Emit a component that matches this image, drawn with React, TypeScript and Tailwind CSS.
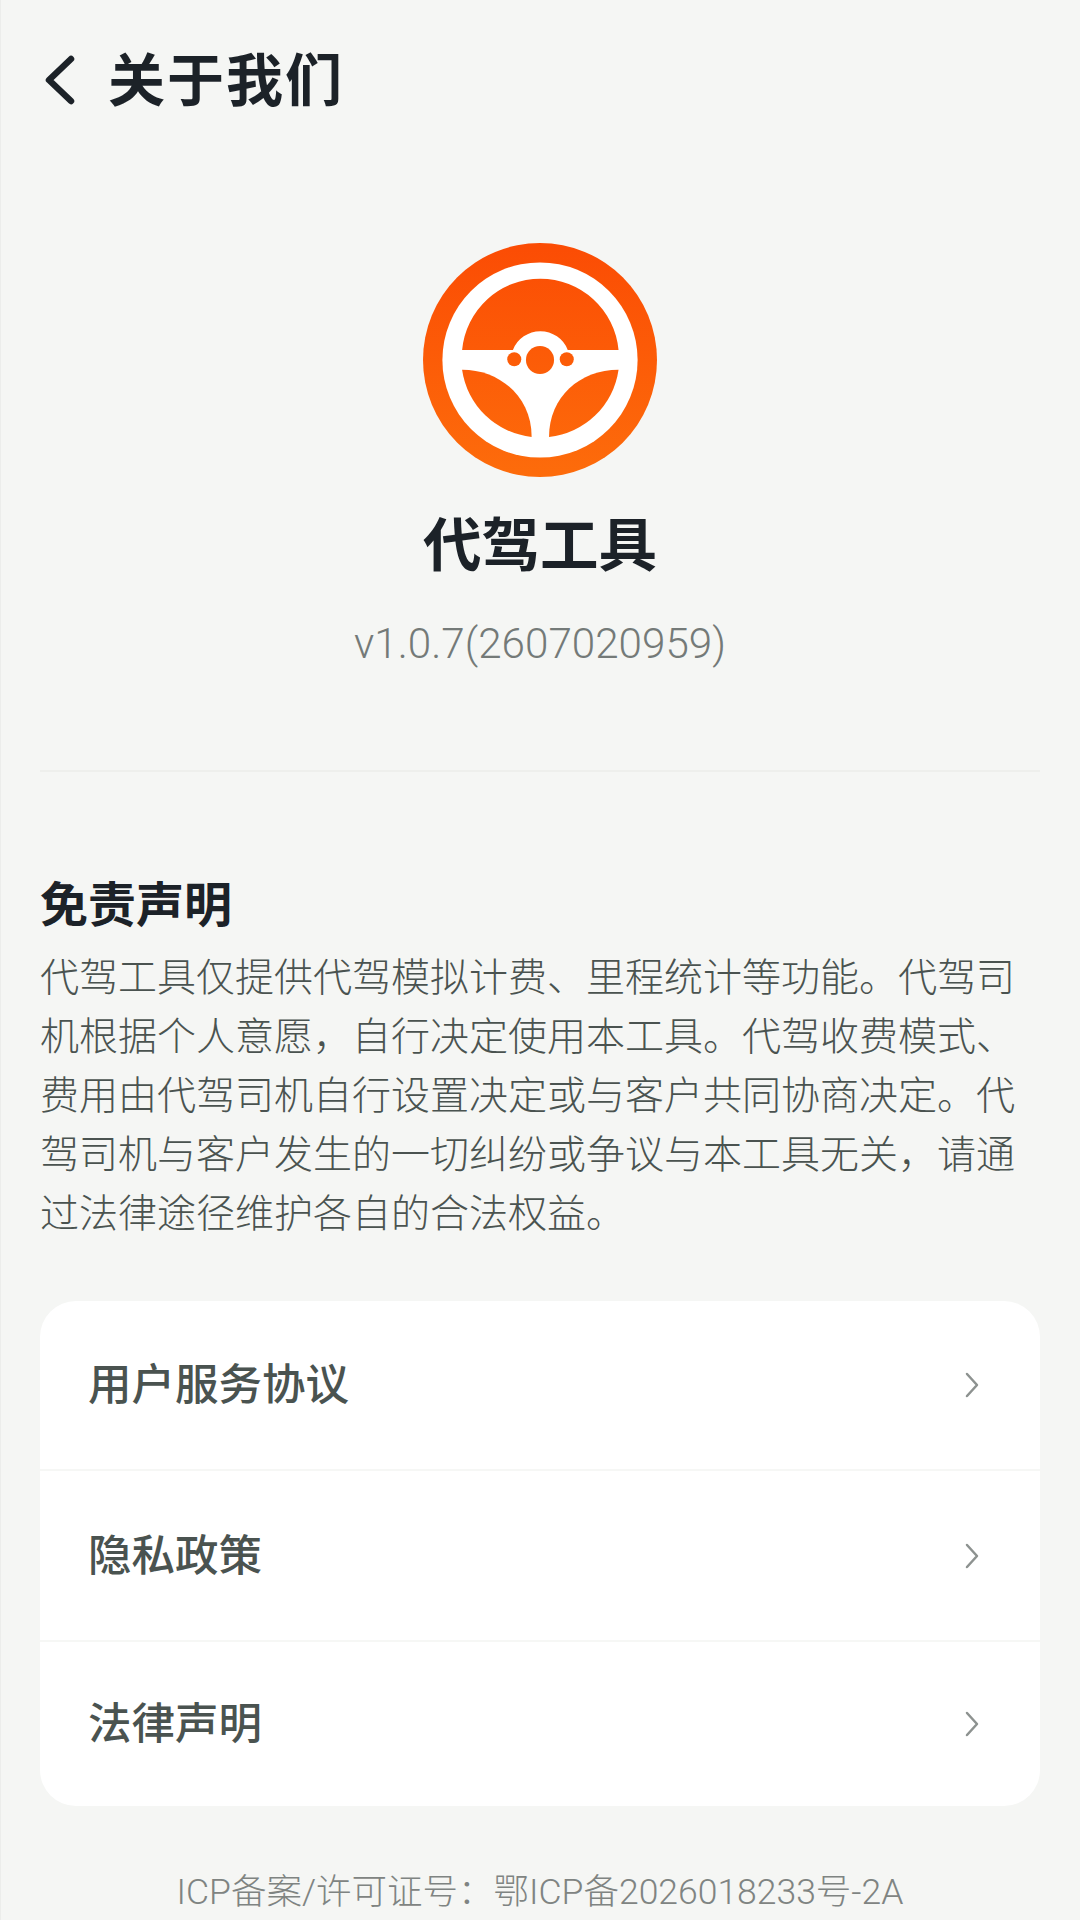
const FONT = 'Roboto, "Noto Sans CJK SC", sans-serif';

const links = [
  { label: '用户服务协议', height: 'h-[168px]' },
  { label: '隐私政策', height: 'h-[171px]' },
  { label: '法律声明', height: 'h-[166px]' },
];

// Steering wheel logo, drawn in the coordinates of a 840 box
function Logo() {
  return (
    <svg viewBox="70 70 700 700" className="h-[234px] w-[234px]">
      <defs>
        <linearGradient id="wheel" gradientUnits="userSpaceOnUse" x1="420" y1="70" x2="420" y2="770">
          <stop offset="0" stopColor="#fb4c04" />
          <stop offset="1" stopColor="#fd6c0b" />
        </linearGradient>
      </defs>
      <circle cx="420" cy="420" r="350" fill="url(#wheel)" />
      <circle cx="420" cy="420" r="292" fill="#fff" />
      <g fill="url(#wheel)">
        <path d="M187 390 A235 235 0 0 1 655 390 L503 390 A88 88 0 0 0 339 390 Z" />
        <path d="M187 449 C300 449 395 530 395 650 A235 235 0 0 1 187 449 Z" />
        <path d="M655 449 C540 449 447 530 447 650 A235 235 0 0 0 655 449 Z" />
        <circle cx="420" cy="420" r="42" />
        <circle cx="343" cy="418" r="21" />
        <circle cx="500" cy="418" r="21" />
      </g>
    </svg>
  );
}

export default function App() {
  return (
    <div
      lang="zh-CN"
      className="flex h-[1920px] w-[1080px] flex-col overflow-hidden border-l border-[#ecedeb] bg-[#f5f6f4] pr-[40px] pl-[39px]"
      style={{ fontFamily: FONT }}
    >
      {/* Header */}
      <div className="mt-[40px] flex h-[80px] items-center">
        <svg viewBox="0 0 32 52" className="ml-[4px] h-[52px] w-[32px]" fill="none">
          <path d="M27 5 L5 26 L27 47" stroke="#1c2228" strokeWidth="6.5" strokeLinecap="round" strokeLinejoin="round" />
        </svg>
        <h1 className="ml-[32px] pt-[3px] text-[57px] leading-none font-bold tracking-[2px] text-[#1c2228]">关于我们</h1>
      </div>

      {/* App identity */}
      <div className="mt-[123px] flex flex-col items-center">
        <Logo />
        <div className="mt-[34px] text-[58.5px] leading-[70px] font-bold text-[#1c2228]">代驾工具</div>
        <div className="mt-[38px] text-[42.2px] leading-[50px] font-light text-[#747a78]">v1.0.7(2607020959)</div>
      </div>

      <div className="mt-[101px] h-[2px] w-[1000px] bg-[#eeefec]" />

      {/* Disclaimer */}
      <h2 className="mt-[104px] text-[48px] leading-[60px] font-bold text-[#1c2228]">免责声明</h2>
      <p className="mt-[13px] w-[1000px] text-[39px] leading-[59px] font-light text-[#4a5350]">
        代驾工具仅提供代驾模拟计费、里程统计等功能。代驾司机根据个人意愿，自行决定使用本工具。代驾收费模式、费用由代驾司机自行设置决定或与客户共同协商决定。代驾司机与客户发生的一切纠纷或争议与本工具无关，请通过法律途径维护各自的合法权益。
      </p>

      {/* Links */}
      <div className="mt-[57px] w-[1000px] overflow-hidden rounded-[36px] bg-white">
        {links.map((row, i) => (
          <div
            key={row.label}
            className={`flex ${row.height} items-center justify-between pr-[61px] pl-[48px] ${i > 0 ? 'border-t-2 border-[#f6f7f5]' : ''}`}
          >
            <span className="pt-[2px] text-[43.5px] font-medium text-[#4a5350]">{row.label}</span>
            <svg viewBox="0 0 14 26" className="h-[26px] w-[14px]" fill="none">
              <path d="M2 2 L12 13 L2 24" stroke="#8d9290" strokeWidth="2.5" strokeLinecap="round" strokeLinejoin="round" />
            </svg>
          </div>
        ))}
      </div>

      <div className="mt-[62px] text-center text-[35.5px] leading-[48px] font-light whitespace-nowrap text-[#7f8482]">
        ICP备案/许可证号：鄂ICP备2026018233号-2A
      </div>
    </div>
  );
}
